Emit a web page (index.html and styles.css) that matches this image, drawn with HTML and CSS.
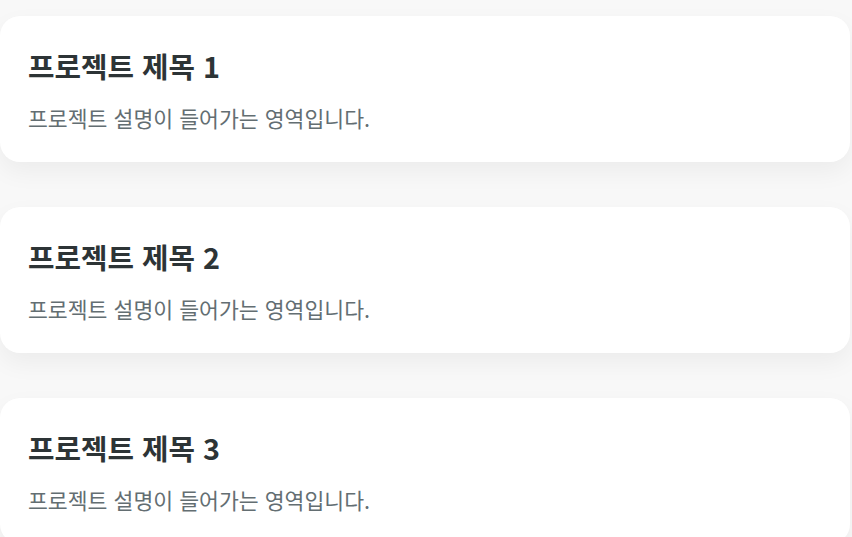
FILE: index.html
```html
<!DOCTYPE html>
<html lang="ko">

<head>
    <meta charset="UTF-8">
    <meta name="viewport" content="width=device-width, initial-scale=1.0">
    <title>프로젝트 목록</title>
    <link rel="stylesheet" href="styles.css">
</head>

<body>
    <div class="project-list">
        <div class="project-card">
            <h3>프로젝트 제목 1</h3>
            <p>프로젝트 설명이 들어가는 영역입니다.</p>
        </div>
        <div class="project-card">
            <h3>프로젝트 제목 2</h3>
            <p>프로젝트 설명이 들어가는 영역입니다.</p>
        </div>
        <div class="project-card">
            <h3>프로젝트 제목 3</h3>
            <p>프로젝트 설명이 들어가는 영역입니다.</p>
        </div>
    </div>
</body>

</html>
```

FILE: styles.css
```css
body {
    margin: 0;
    font-family: 'Noto Sans CJK KR', 'Noto Sans', sans-serif;
    background-color: #f8f8f8;
    overflow: hidden;
}

.project-list {
    display: flex;
    flex-direction: column;
    gap: 45px;
    padding: 16px 2px 0 0;
}

.project-card {
    background: #ffffff;
    border-radius: 20px;
    padding: 29px 28px;
    box-shadow: 0 10px 25px rgba(0, 0, 0, 0.05);
    height: 146px;
    box-sizing: border-box;
}

.project-card h3 {
    margin: 0 0 16px;
    font-size: 28.8px;
    font-weight: 700;
    color: #2d3436;
}

.project-card p {
    margin: 0;
    font-size: 21.6px;
    color: #636e72;
}
```
